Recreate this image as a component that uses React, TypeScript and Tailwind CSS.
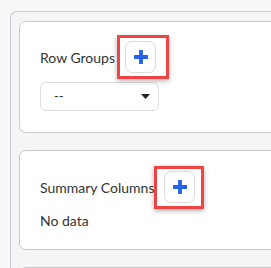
import React from "react";

function PlusButton({ box }: { box: string }) {
  return (
    <div className="relative ml-[10px]">
      <button className="flex h-[32px] w-[31px] items-center justify-center rounded-[7px] border border-[#dcdcdc] bg-white">
        <svg width="16" height="16" viewBox="0 0 16 16">
          <path d="M8 1v14M1 8h14" stroke="#2563eb" strokeWidth="3.8" />
        </svg>
      </button>
      <div className={`pointer-events-none absolute border-[3px] border-[#ef4444] shadow-[0_2px_5px_rgba(0,0,0,0.3)] ${box}`} />
    </div>
  );
}

function Card({ children, className }: { children: React.ReactNode; className: string }) {
  return (
    <div className={`rounded-[7px] border border-[#c9c9d1] bg-white pl-[20px] ${className}`}>
      {children}
    </div>
  );
}

export default function App() {
  return (
    <div
      className="h-[268px] w-[271px] overflow-hidden bg-[#f7f7f7] pl-[10px] pt-[11px] text-[14px] text-[#333]"
      style={{ fontFamily: "Lato, 'Liberation Sans', sans-serif" }}
    >
      <div className="w-[400px] rounded-tl-[7px] border-l border-t border-[#c9c9d1] bg-[#f5f5f5] pl-[8px] pt-[9px] h-[300px]">
        <div className="flex flex-col gap-[17px]">
          <Card className="h-[112px] pt-[19px]">
            <div className="flex items-center">
              <span>Row Groups</span>
              <PlusButton box="-left-[8px] -right-[13px] -top-[6px] -bottom-[6px]" />
            </div>
            <div className="mt-[9px] flex h-[29px] w-[119px] items-center justify-between rounded-[6px] border border-[#dcdcdc] bg-white pl-[13px] pr-[8px]">
              <span className="text-[13px]">--</span>
              <svg width="9" height="5" viewBox="0 0 9 5">
                <path d="M0 0h9L4.5 5z" fill="#222" />
              </svg>
            </div>
          </Card>
          <Card className="h-[100px] pt-[20px]">
            <div className="flex items-center">
              <span>Summary Columns</span>
              <PlusButton box="-left-[10px] -right-[9px] -top-[5px] -bottom-[6px]" />
            </div>
            <div className="mt-[8px] leading-[20px]">No data</div>
          </Card>
          <Card className="h-[100px]">
            <div />
          </Card>
        </div>
      </div>
    </div>
  );
}
